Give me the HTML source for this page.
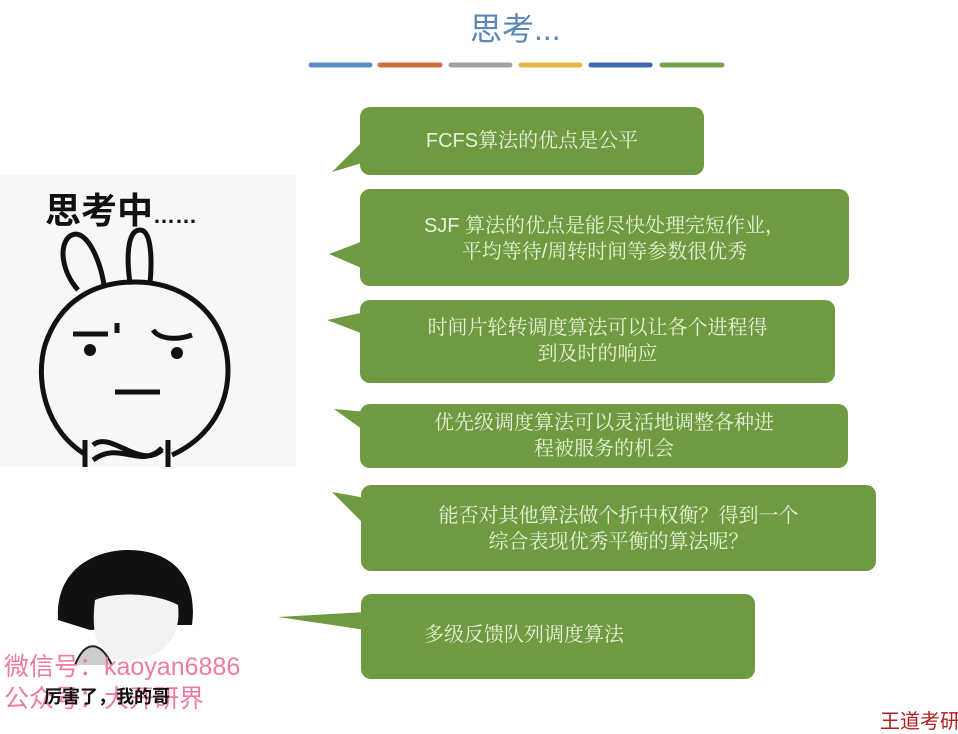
<!DOCTYPE html>
<html><head><meta charset="utf-8"><style>
body{margin:0;width:958px;height:717px;background:#fff;overflow:hidden;position:relative;font-family:"Liberation Serif","Noto Serif CJK SC",serif}
.t{position:absolute;color:#e6f2d6;font-size:20px;line-height:26px;text-align:center;font-family:"Liberation Sans","Noto Serif CJK SC",serif;white-space:nowrap}
</style></head><body>
<div style="position:absolute;left:470px;top:4px;font-size:32px;color:#5b86b8;font-family:'Liberation Sans','Noto Sans CJK SC',sans-serif">思考...</div>
<svg width="958" height="717" style="position:absolute;left:0;top:0">
<g stroke-width="5" stroke-linecap="round">
<line x1="311" y1="65" x2="370" y2="65" stroke="#5b8ec6"/>
<line x1="380" y1="65" x2="440" y2="65" stroke="#cf7040"/>
<line x1="451" y1="65" x2="510" y2="65" stroke="#a2a2a2"/>
<line x1="521" y1="65" x2="580" y2="65" stroke="#e9b447"/>
<line x1="591" y1="65" x2="650" y2="65" stroke="#3d68b4"/>
<line x1="662" y1="65" x2="722" y2="65" stroke="#77a04a"/>
</g>
<g fill="#6f9a42">
<polygon points="366,138 332,172 372,160"/>
<polygon points="366,240 329,254 366,270"/>
<polygon points="366,312 327,320 366,335"/>
<polygon points="366,412 334,409 366,432"/>
<polygon points="366,498 332,492 366,526"/>
<polygon points="366,612 278,617 366,630"/>
<rect x="360" y="107" width="344" height="68" rx="10"/>
<rect x="360" y="189" width="489" height="97" rx="10"/>
<rect x="360" y="300" width="475" height="83" rx="10"/>
<rect x="360" y="404" width="488" height="64" rx="10"/>
<rect x="361" y="485" width="515" height="86" rx="10"/>
<rect x="361" y="594" width="394" height="85" rx="10"/>
</g>
<rect x="0" y="175" width="296" height="292" fill="#f6f8f6"/>
<g fill="none" stroke="#111" stroke-width="5">
<path d="M78,290 C62,272 58,245 70,236 C85,226 100,258 104,285"/>
<path d="M130,283 C126,255 128,230 140,230 C152,230 152,262 150,283"/>
<path d="M86,455 C45,430 35,380 45,345 C60,300 95,282 135,282 C190,282 228,320 228,370 C228,410 205,440 172,455"/>
<path d="M73,334 H108 M117,323 V333 M153,330 C160,340 178,340 192,335"/>
<path d="M115,392 H160"/>
<path d="M85,440 V467 M168,440 V467 M93,445 C110,430 140,470 162,450 M93,460 C120,440 140,470 162,448"/>
</g>
<circle cx="90" cy="350" r="6" fill="#111"/><circle cx="177" cy="353" r="6" fill="#111"/>
<path d="M58,620 C55,565 100,550 128,550 C175,550 198,580 192,625 L170,625 L90,630 Z" fill="#111"/>
<path d="M95,600 C120,590 160,595 178,605 C182,640 160,660 125,660 C100,660 90,640 95,600Z" fill="#f2f2f2"/>
<path d="M75,665 C85,640 100,640 112,665" fill="#ccc" stroke="#222" stroke-width="2"/>
</svg>
<div style="position:absolute;left:45px;top:182px;font-size:36px;font-weight:bold;color:#111;font-family:'Liberation Sans','Noto Sans CJK SC',sans-serif;white-space:nowrap">思考中<span style="font-size:22px">……</span></div>
<div class="t" style="left:360px;top:128px;width:344px">FCFS算法的优点是公平</div>
<div class="t" style="left:360px;top:213px;width:489px">SJF 算法的优点是能尽快处理完短作业，<br>平均等待/周转时间等参数很优秀</div>
<div class="t" style="left:360px;top:315px;width:475px">时间片轮转调度算法可以让各个进程得<br>到及时的响应</div>
<div class="t" style="left:360px;top:410px;width:488px">优先级调度算法可以灵活地调整各种进<br>程被服务的机会</div>
<div class="t" style="left:361px;top:503px;width:515px">能否对其他算法做个折中权衡？得到一个<br>综合表现优秀平衡的算法呢？</div>
<div class="t" style="left:327px;top:622px;width:394px">多级反馈队列调度算法</div>
<div style="position:absolute;left:4px;top:651px;font-size:25px;line-height:32px;color:#f07aa0;font-family:'Liberation Sans','Noto Sans CJK SC',sans-serif;white-space:nowrap">微信号：kaoyan6886<br>公众号：大开研界</div>
<div style="position:absolute;left:44px;top:683px;font-size:18px;font-weight:bold;color:#111;font-family:'Liberation Sans','Noto Sans CJK SC',sans-serif;white-space:nowrap">厉害了，我的哥</div>
<div style="position:absolute;left:880px;top:705px;font-size:20px;color:#b02020;font-family:'Liberation Sans','Noto Sans CJK SC',sans-serif;white-space:nowrap">王道考研</div>
</body></html>
